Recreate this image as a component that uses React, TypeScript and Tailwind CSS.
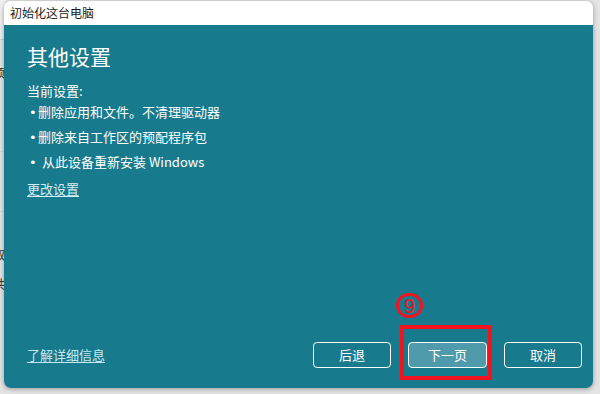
import React from "react";

const font = { fontFamily: '"Noto Sans CJK SC", "Noto Sans", sans-serif' };

function Bullet({ children, wide }: { children: React.ReactNode; wide?: boolean }) {
  return (
    <div className="flex items-center h-[22px]">
      <span className="w-[9px] text-[13px] leading-none" style={{ fontFamily: '"DejaVu Sans", sans-serif' }}>•</span>
      <span className={wide ? "pl-[4px]" : ""}>{children}</span>
    </div>
  );
}

export default function App() {
  return (
    <div className="relative w-[600px] h-[394px] overflow-hidden bg-[#e4e4e4]" style={font}>
      {/* page behind the dialog */}
      <div className="absolute left-0 top-0 w-[6px] h-full">
        <div className="h-[40px] border-b border-[#d0d0d0] bg-[#f0f0f0]" />
        <div className="h-[112px] border-b border-[#d6d6d6] text-[12px] text-[#333] pt-[24px] -ml-[7px]">硕</div>
        <div className="h-[60px] border-b border-[#d6d6d6]" />
        <div className="text-[12px] text-[#333] pt-[28px] -ml-[7px] leading-[29px]">
          取<br />共
        </div>
      </div>

      <div className="relative ml-[4px] mt-[1px] w-[589px] h-[387px] rounded-[7px] overflow-hidden flex flex-col shadow-[0_1px_5px_rgba(0,0,0,0.35)]">
        <div className="h-[24px] bg-white flex items-center pl-[6px] text-[12px] text-[#1a1a1a]">
          初始化这台电脑
        </div>
        <div className="flex-1 bg-[#187a8d] text-white flex flex-col pl-[23px] pr-[11px] pb-[20px]">
          <h1 className="pt-[17px] text-[21px] leading-[28px] font-normal">其他设置</h1>
          <div className="mt-[11px] text-[13px] leading-[20px]">当前设置:</div>
          <div className="flex flex-col gap-[3px] text-[13px] pl-[2px]">
            <Bullet>删除应用和文件。不清理驱动器</Bullet>
            <Bullet>删除来自工作区的预配程序包</Bullet>
            <Bullet wide>从此设备重新安装 Windows</Bullet>
          </div>
          <div className="mt-[5px] text-[13px] leading-[22px] text-[#d6eef3] underline underline-offset-2">
            更改设置
          </div>
          <div className="mt-auto flex items-center justify-between">
            <span className="text-[13px] text-[#c3e9f3] underline underline-offset-2">了解详细信息</span>
            <div className="flex gap-[17px] text-[13px]">
              <button className="w-[78px] h-[26px] rounded-[4px] border-[1.5px] border-white bg-[#187a8d]">后退</button>
              <div className="relative">
                <button className="w-[79px] h-[26px] rounded-[4px] border-[1.5px] border-white bg-[#4f9aab]">下一页</button>
                <div className="absolute -left-[8px] -right-[5px] -top-[17px] -bottom-[12px] border-[4px] border-[#f2141e]" />
                <div
                  className="absolute -left-[12px] -top-[49px] w-[27px] h-[25px] rounded-full border-[3px] border-[#f2141e] flex items-center justify-center text-[#f2141e] text-[20px] leading-none"
                  style={{ fontFamily: '"Liberation Sans", sans-serif' }}
                >
                  9
                </div>
              </div>
              <button className="w-[78px] h-[26px] rounded-[4px] border-[1.5px] border-white bg-[#187a8d]">取消</button>
            </div>
          </div>
        </div>
      </div>
    </div>
  );
}
